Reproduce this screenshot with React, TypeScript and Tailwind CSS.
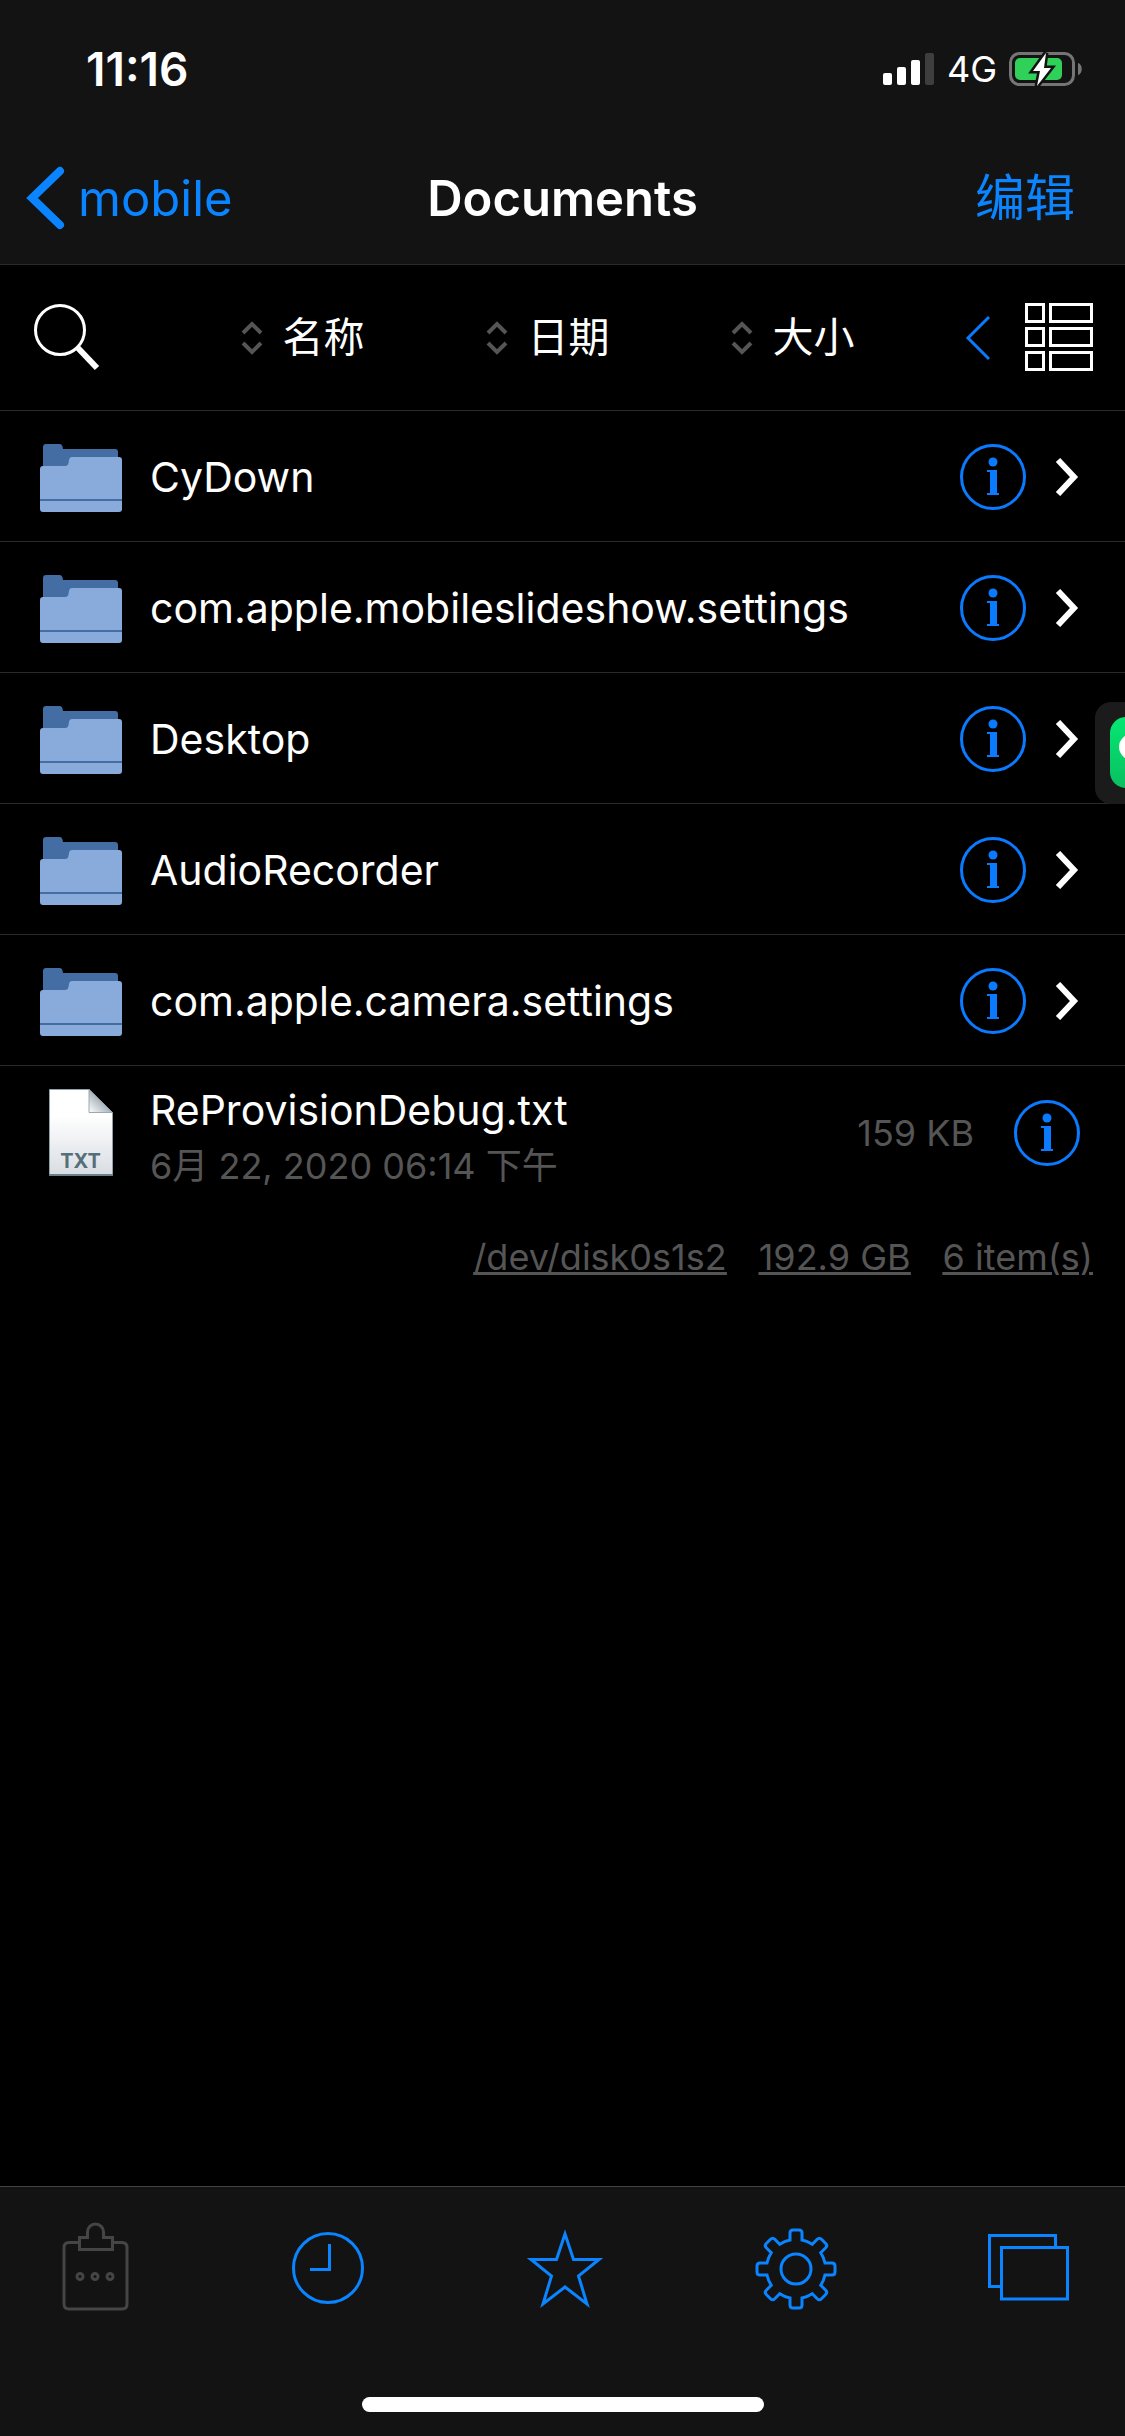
import React from 'react';

const BLUE = '#0a84ff';

const folders = [
  'CyDown',
  'com.apple.mobileslideshow.settings',
  'Desktop',
  'AudioRecorder',
  'com.apple.camera.settings',
];

const sortKeys = ['名称', '日期', '大小'];

const gearPath = (() => {
  const point = (x: number, y: number, a: number) => {
    const c = Math.cos(a);
    const s = Math.sin(a);
    return `${(x * c - y * s).toFixed(2)} ${(x * s + y * c).toFixed(2)}`;
  };
  let d = '';
  for (let i = 0; i < 8; i++) {
    const a = (i * Math.PI) / 4;
    d += `${i === 0 ? 'M' : 'A30 30 0 0 1 '}${point(-6, -29, a)}`;
    d += `L${point(-6, -36, a)}Q${point(-6, -39, a)} ${point(-3, -39, a)}`;
    d += `L${point(3, -39, a)}Q${point(6, -39, a)} ${point(6, -36, a)}`;
    d += `L${point(6, -29, a)}`;
  }
  return `${d}A30 30 0 0 1 -6 -29Z`;
})();

function SignalIcon() {
  return (
    <svg width="52" height="34" viewBox="0 0 52 34" aria-hidden="true">
      <rect x="0" y="21" width="9" height="12" rx="2" fill="#fff" />
      <rect x="14" y="15" width="9" height="18" rx="2" fill="#fff" />
      <rect x="28" y="8" width="9" height="25" rx="2" fill="#fff" />
      <rect x="42" y="1" width="9" height="32" rx="2" fill="#3e3e3e" />
    </svg>
  );
}

function BatteryIcon() {
  return (
    <svg width="74" height="36" viewBox="0 0 74 36" aria-hidden="true">
      <rect x="1.5" y="2.5" width="63" height="31" rx="9" fill="none" stroke="#757575" strokeWidth="3" />
      <path d="M69 12c5 1 5 11 0 12z" fill="#757575" />
      <rect x="6" y="7" width="47" height="22" rx="5" fill="#30d158" />
      <path
        d="M37 2L24 20h7l-3 15L42 17h-7z"
        fill="#fff"
        stroke="#131313"
        strokeWidth="5"
        paintOrder="stroke"
      />
    </svg>
  );
}

function FolderIcon() {
  return (
    <svg width="82" height="72" viewBox="0 -2 82 72" aria-hidden="true">
      <path d="M3 26V4q0-3 3-3h14q2 0 2.500 2.500L23 6h52q3 0 3 3v17z" fill="#446da3" />
      <path d="M0 26q0-3 3-3h22q3 0 3.500-3l.5-3q.5-3 3-3h47q3 0 3 3v49q0 3-3 3H3q-3 0-3-3z" fill="#88abdb" />
      <rect y="56" width="82" height="2" fill="#446da3" />
    </svg>
  );
}

function TextFileIcon() {
  return (
    <svg width="64" height="87" viewBox="0 0 64 87" role="img" aria-label="TXT file">
      <defs>
        <linearGradient id="sheet" x1="0" y1="0" x2="0" y2="1">
          <stop offset="0.3" stopColor="#fff" />
          <stop offset="1" stopColor="#d8dde2" />
        </linearGradient>
        <linearGradient id="fold" x1="0" y1="1" x2="0.5" y2="0.5">
          <stop offset="0" stopColor="#fff" />
          <stop offset="1" stopColor="#aab4bd" />
        </linearGradient>
      </defs>
      <path d="M.5.500H40L63.500 24V86.500H.5z" fill="url(#sheet)" stroke="#8fa0a8" />
      <path d="M40 .5V23.500H63.500z" fill="url(#fold)" stroke="#9aaab2" />
      <rect y="85" width="64" height="2" fill="#6a7f89" />
      <text x="31.500" y="79" textAnchor="middle" fontFamily="Inter, sans-serif" fontSize="20" fontWeight="700" fill="#546e7a">
        TXT
      </text>
    </svg>
  );
}

function InfoButton({ name }: { name: string }) {
  return (
    <button type="button" aria-label={`Info: ${name}`} className="shrink-0">
      <svg className="block" width="66" height="66" viewBox="0 0 66 66" fill="none" aria-hidden="true">
        <circle cx="33" cy="33" r="31.500" stroke="#0a7aff" strokeWidth="3" />
        <circle cx="33" cy="18" r="4.500" fill="#0a7aff" />
        <path d="M27 26h10v23h2v2H27v-2h3V28h-3z" fill="#0a7aff" />
      </svg>
    </button>
  );
}

function SortIcon() {
  return (
    <svg width="22" height="36" viewBox="0 0 22 36" fill="none" stroke="#555" strokeWidth="4" aria-hidden="true">
      <path d="M2 13l9-9 9 9M2 23l9 9 9-9" />
    </svg>
  );
}

function TabButton({ label, disabled, children }: { label: string; disabled?: boolean; children: React.ReactNode }) {
  return (
    <button type="button" aria-label={label} disabled={disabled} className="shrink-0">
      <svg
        className="block"
        width="90"
        height="96"
        viewBox="-45 -48 90 96"
        fill="none"
        stroke={disabled ? '#454545' : BLUE}
        strokeWidth="3"
        strokeMiterlimit="10"
        aria-hidden="true"
      >
        {children}
      </svg>
    </button>
  );
}

export default function App() {
  return (
    <div className="relative flex min-h-screen w-full flex-col overflow-hidden bg-black font-['Inter','Noto_Sans_CJK_SC',sans-serif] text-white">
      <header className="border-b border-[#2a2a2a] bg-[#131313]">
        <div className="flex h-[132px] items-center justify-between pt-1.5 pr-[42px] pl-[86px]">
          <time className="text-[46px] leading-none font-semibold">11:16</time>
          <div className="flex items-center gap-3">
            <SignalIcon />
            <span className="text-[36px] leading-none">4G</span>
            <BatteryIcon />
          </div>
        </div>
        <nav className="grid h-[132px] grid-cols-[1fr_auto_1fr] items-center px-[26px]">
          <a href="#mobile" className="flex items-center gap-3 text-[49px] leading-none text-[#0a84ff]">
            <svg width="40" height="64" viewBox="0 0 40 64" fill="none" stroke="currentColor" strokeWidth="8" strokeLinecap="round" aria-hidden="true">
              <path d="M34 5L6 32l28 27" />
            </svg>
            mobile
          </a>
          <h1 className="text-[49px] leading-none font-semibold">Documents</h1>
          <button type="button" className="mr-6 justify-self-end text-[50px] leading-none text-[#0a84ff]">
            编辑
          </button>
        </nav>
      </header>

      <div className="flex h-[146px] items-center justify-between border-b border-[#2a2a2a] pr-8 pl-[34px]">
        <button type="button" aria-label="Search">
          <svg className="block" width="68" height="68" viewBox="0 0 68 68" fill="none" stroke="currentColor" aria-hidden="true">
            <circle cx="26" cy="26" r="24.500" strokeWidth="3" />
            <path d="M43 43l20 21" strokeWidth="6" />
          </svg>
        </button>
        <div className="flex gap-[121px] pl-7">
          {sortKeys.map((key) => (
            <button key={key} type="button" className="flex items-center gap-5 text-[41px] leading-none">
              <SortIcon />
              {key}
            </button>
          ))}
        </div>
        <div className="flex items-center gap-8">
          <button type="button" aria-label="Collapse">
            <svg className="block" width="28" height="46" viewBox="0 0 28 46" fill="none" stroke="#0a7aff" strokeWidth="3" aria-hidden="true">
              <path d="M24 2L3 23l21 21" />
            </svg>
          </button>
          <button type="button" aria-label="List view">
            <svg className="block" width="68" height="70" viewBox="0 0 68 70" fill="none" stroke="currentColor" strokeWidth="3" aria-hidden="true">
              <path d="M1.500 1.500h17v17h-17zM25.500 1.500h41v17h-41zM1.500 25.500h17v17h-17zM25.500 25.500h41v17h-41zM1.500 49.500h17v17h-17zM25.500 49.500h41v17h-41z" />
            </svg>
          </button>
        </div>
      </div>

      <main className="flex-1">
        <ul>
          {folders.map((name) => (
            <li key={name} className="flex h-[131px] items-center border-b border-[#2a2a2a] pt-0.5 pr-[46px] pl-10">
              <a href="#folder" className="flex min-w-0 flex-1 items-center gap-7 text-[41px] leading-none">
                <FolderIcon />
                {name}
              </a>
              <InfoButton name={name} />
              <svg className="ml-7 shrink-0" width="25" height="38" viewBox="0 0 25 38" fill="none" stroke="#fff" strokeWidth="6" aria-hidden="true">
                <path d="M4 2l16 17L4 36" />
              </svg>
            </li>
          ))}
          <li className="flex h-[131px] items-center pt-0.5 pr-[45px] pl-[49px]">
            <TextFileIcon />
            <a href="#file" className="ml-[37px] min-w-0 flex-1 pt-2.5">
              <span className="block text-[41px] leading-[56px]">ReProvisionDebug.txt</span>
              <span className="block text-[36px] leading-[56px] text-[#555]">6月 22, 2020 06:14 下午</span>
            </a>
            <span className="mr-10 text-[36px] leading-none text-[#555]">159 KB</span>
            <InfoButton name="ReProvisionDebug.txt" />
          </li>
        </ul>
        <div className="flex justify-end gap-8 pt-[38px] pr-8 text-[36px] leading-[44px] text-[#555] underline decoration-3">
          <a href="#disk">/dev/disk0s1s2</a>
          <a href="#space">192.9 GB</a>
          <a href="#items">6 item(s)</a>
        </div>
      </main>

      <button type="button" aria-label="Open messages" className="absolute top-[702px] right-0 h-[102px] w-[30px] overflow-hidden rounded-l-2xl bg-[#1b1b1b]">
        <svg className="block" width="30" height="102" viewBox="0 0 30 102" aria-hidden="true">
          <defs>
            <linearGradient id="messages" x1="0" y1="0" x2="0" y2="1">
              <stop offset="0" stopColor="#04e873" />
              <stop offset="1" stopColor="#0abf60" />
            </linearGradient>
          </defs>
          <rect x="15" y="15" width="71" height="71" rx="16" fill="url(#messages)" />
          <ellipse cx="40" cy="45" rx="16" ry="14" fill="#fff" />
        </svg>
      </button>

      <footer className="flex h-[250px] flex-col items-center justify-between border-t border-[#444] bg-[#131313] pt-[34px] pb-6">
        <nav className="flex w-full justify-between px-[51px]">
          <TabButton label="Clipboard" disabled>
            <path d="M-16 -26.500H-27q-5 0-5 5V35q0 5 5 5H26q5 0 5-5V-21.500q0-5-5-5H16" />
            <path d="M-16.500 -31.500H-8.500V-37a7.500 7.500 0 0 1 16 0V-31.500H16.500V-19.500H-16.500z" />
            <circle cx="-16" cy="7.500" r="3" />
            <circle cx="-1" cy="7.500" r="3" />
            <circle cx="14" cy="7.500" r="3" />
          </TabButton>
          <TabButton label="Recent">
            <circle cx="-1" cy="-1" r="34.500" />
            <path d="M0.500 -25V.5H-19" />
          </TabButton>
          <TabButton label="Favorites">
            <path d="M2 -35L10.500 -9.500H36L15.500 7L24 35L2 18L-20 35L-11.500 7L-32 -9.500H-6.500z" />
          </TabButton>
          <TabButton label="Settings">
            <path d={gearPath} />
            <circle r="15" />
          </TabButton>
          <TabButton label="Windows">
            <path d="M-27.500 17.500H-39.500V-33.500H26.500V-21.500M-27.500 -21.500H38.500V30H-27.500z" />
          </TabButton>
        </nav>
        <div className="h-[15px] w-[402px] rounded-full bg-white" />
      </footer>
    </div>
  );
}
